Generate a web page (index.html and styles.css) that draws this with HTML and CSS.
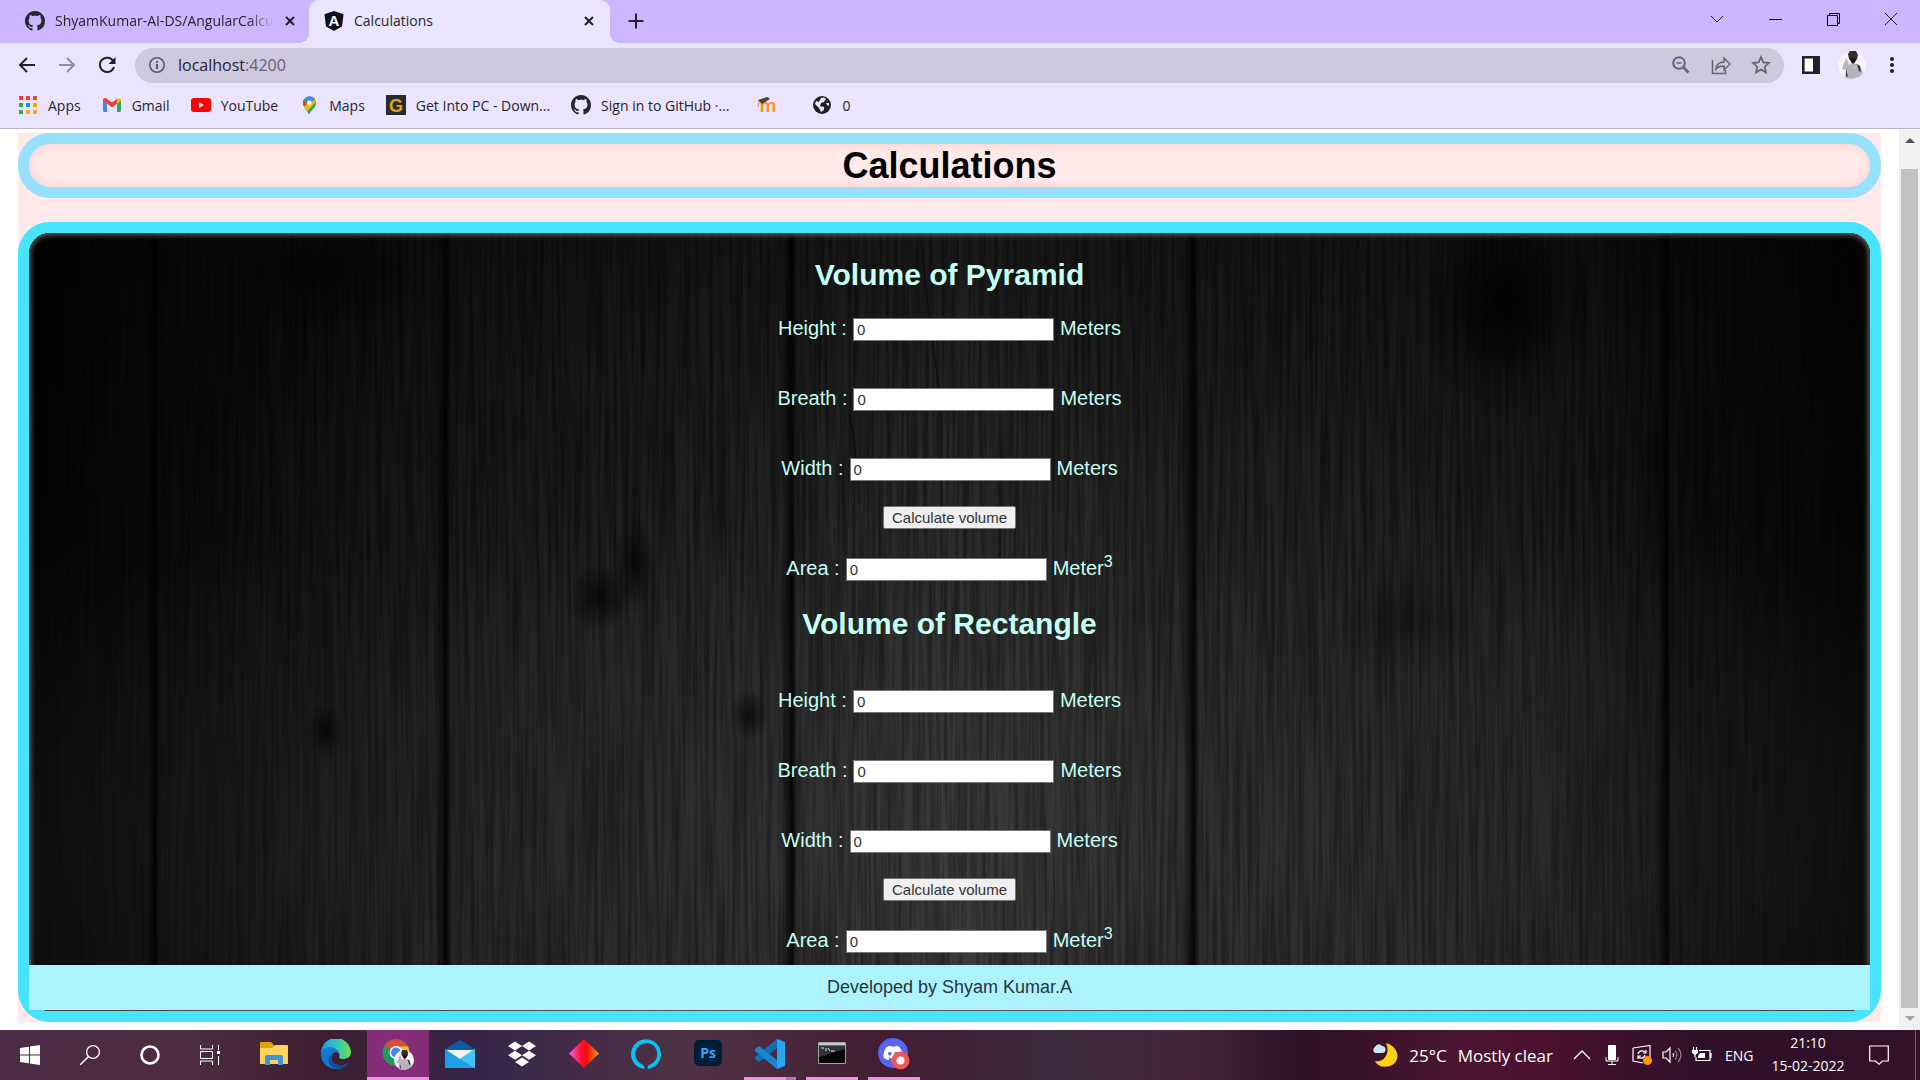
FILE: index.html
```html
<!DOCTYPE html>
<html lang="en">
<head>
<meta charset="utf-8">
<title>Calculations</title>
<link rel="stylesheet" href="styles.css">
</head>
<body>
<svg class="defs" aria-hidden="true">
  <symbol id="github" viewBox="0 0 16 16"><path fill="#24292f" d="M8 0C3.58 0 0 3.58 0 8c0 3.54 2.29 6.53 5.47 7.59.4.07.55-.17.55-.38 0-.19-.01-.82-.01-1.49-2.01.37-2.53-.49-2.69-.94-.09-.23-.48-.94-.82-1.13-.28-.15-.68-.52-.01-.53.63-.01 1.08.58 1.23.82.72 1.21 1.87.87 2.33.66.07-.52.28-.87.51-1.07-1.78-.2-3.64-.89-3.64-3.95 0-.87.31-1.59.82-2.15-.08-.2-.36-1.02.08-2.12 0 0 .67-.21 2.2.82.64-.18 1.32-.27 2-.27s1.36.09 2 .27c1.53-1.04 2.2-.82 2.2-.82.44 1.1.16 1.92.08 2.12.51.56.82 1.27.82 2.15 0 3.07-1.87 3.75-3.65 3.95.29.25.54.73.54 1.48 0 1.07-.01 1.93-.01 2.2 0 .21.15.46.55.38A8.01 8.01 0 0 0 16 8c0-4.42-3.58-8-8-8z"/></symbol>
  <symbol id="close" viewBox="0 0 12 12"><path d="M2 2l8 8M10 2l-8 8" stroke="#202124" stroke-width="2" fill="none"/></symbol>
  <symbol id="portrait" viewBox="0 0 28 28">
    <circle cx="14" cy="14" r="14" fill="#f5f3f5"/>
    <path d="M7 27l1-8-4-1 3-8h3l1 4 3-2 5 1 4 4 2 5-4 4-7 2z" fill="#b4b3bb"/>
    <path d="M19 13l3 2 1 6-2-1zM8 18l2 8-2-1z" fill="#33323a"/>
    <path d="M10 3l2-3h6l2 4-1 4-2 3h-3l-3-3z" fill="#3a2a26"/>
    <path d="M12 7h6l-1 4-2 2-2-2z" fill="#17151a"/>
    <path d="M7 10l1-3 2 3v4zM15 15l3 1-1 3z" fill="#d9b7a8"/>
  </symbol>
</svg>

<header class="browser">
  <div class="tabs">
    <div class="tab">
      <svg class="i20"><use href="#github"/></svg>
      <span class="tab-title fade">ShyamKumar-AI-DS/AngularCalcu</span>
      <button class="plain" aria-label="Close tab"><svg class="i12"><use href="#close"/></svg></button>
    </div>
    <div class="tab active">
      <svg class="i20" viewBox="0 0 20 20"><path d="M10 0l9.500 3.300-1.500 12.200L10 20l-8-4.500L.5 3.300z" fill="#0d0f1c"/><text x="10" y="15" text-anchor="middle" class="logo-a">A</text></svg>
      <span class="tab-title">Calculations</span>
      <button class="plain" aria-label="Close tab"><svg class="i12"><use href="#close"/></svg></button>
    </div>
    <button class="plain new-tab" aria-label="New tab"><svg class="i16" viewBox="0 0 16 16"><path d="M8 .5v15M.5 8h15" stroke="#202124" stroke-width="2"/></svg></button>
    <div class="window-buttons">
      <button class="plain" aria-label="Search tabs"><svg class="i14" viewBox="0 0 14 14"><path d="M1 4l6 6 6-6" fill="none" stroke="#222"/></svg></button>
      <button class="plain" aria-label="Minimise"><svg class="i14" viewBox="0 0 14 14"><path d="M1 7.500h13" stroke="#000"/></svg></button>
      <button class="plain" aria-label="Restore"><svg class="i14" viewBox="0 0 14 14"><path d="M1.500 3.500h10v10h-10zM3.500 3V1.500h10v10H12" fill="none" stroke="#000"/></svg></button>
      <button class="plain" aria-label="Close"><svg class="i14" viewBox="0 0 14 14"><path d="M1 1l12 12M13 1L1 13" stroke="#222"/></svg></button>
    </div>
  </div>

  <div class="toolbar">
    <button class="plain nav" aria-label="Back"><svg class="i18" viewBox="0 0 18 18"><path d="M17 9H2M9 2L2 9l7 7" fill="none" stroke="#202124" stroke-width="2"/></svg></button>
    <button class="plain nav" aria-label="Forward"><svg class="i18" viewBox="0 0 18 18"><path d="M1 9h15M9 2l7 7-7 7" fill="none" stroke="#918da0" stroke-width="2"/></svg></button>
    <button class="plain nav" aria-label="Reload"><svg class="i18" viewBox="0 0 18 18"><path d="M15.500 5.500A7.200 7.200 0 1 0 16 11" fill="none" stroke="#202124" stroke-width="2"/><path d="M17.500 1v7h-7z" fill="#202124"/></svg></button>
    <div class="omnibox">
      <svg class="i18" viewBox="0 0 18 18"><circle cx="9" cy="9" r="7.200" fill="none" stroke="#5a5762" stroke-width="1.600"/><path d="M9 8v5M9 5v2" stroke="#5a5762" stroke-width="2"/></svg>
      <a class="url" href="#">localhost<span>:4200</span></a>
      <svg class="i20" viewBox="0 0 20 20"><circle cx="8" cy="8" r="5.800" fill="none" stroke="#67646f" stroke-width="2"/><path d="M12.500 12.500l5 5" stroke="#67646f" stroke-width="2.500"/><path d="M5.500 8h5" stroke="#67646f" stroke-width="1.500"/></svg>
      <svg class="i20" viewBox="0 0 20 20"><path d="M1.500 5v13.500h13V15M5 14c.5-5 3-7 8-7V3l6 6-6 6v-4c-4 0-6 .5-8 3z" fill="none" stroke="#67646f" stroke-width="1.500"/></svg>
      <svg class="i20" viewBox="0 0 20 20"><path d="M10 2l2.300 5.400 5.700.5-4.300 3.800 1.300 5.800-5-3-5 3 1.300-5.800L2 7.900l5.700-.5z" fill="none" stroke="#67646f" stroke-width="1.700"/></svg>
    </div>
    <svg class="i18" viewBox="0 0 18 18"><path d="M1.300 1.300h15.400v15.400H1.300z" fill="#fdfcff" stroke="#202124" stroke-width="2.600"/><path d="M11 1h6v16h-6z" fill="#202124"/></svg>
    <svg class="i28"><use href="#portrait"/></svg>
    <svg class="i16" viewBox="0 0 16 16"><g fill="#202124"><circle cx="8" cy="2" r="2"/><circle cx="8" cy="8" r="2"/><circle cx="8" cy="14" r="2"/></g></svg>
  </div>

  <nav class="bookmarks">
    <a href="#"><svg class="i20" viewBox="0 0 20 20"><g fill="#ea4335"><path d="M1 1h4v4H1zM8 1h4v4H8zM15 1h4v4h-4z"/></g><path d="M1 8h4v4H1zM1 15h4v4H1z" fill="#34a853"/><path d="M8 8h4v4H8z" fill="#1a8cf0"/><path d="M15 8h4v4h-4zM8 15h4v4H8zM15 15h4v4h-4z" fill="#fbaa05"/></svg>Apps</a>
    <a href="#"><svg class="i20" viewBox="0 0 20 20"><path d="M1 5l4 3v9H2.500Q1 17 1 15.500z" fill="#4285f4"/><path d="M19 5l-4 3v9h2.500q1.500 0 1.500-1.500z" fill="#34a853"/><path d="M1 5c0-2 2-2.500 3.500-1.500L10 7.500l5.500-4L15 8.500l-5 4-5-4-4-2z" fill="#ea4335"/><path d="M15 4c2-1.500 4-.5 4 1.500l-4 3.500z" fill="#fbbc04"/></svg>Gmail</a>
    <a href="#"><svg class="i20" viewBox="0 0 20 20"><rect y="3" width="20" height="14" rx="3" fill="red"/><path d="M8 7l5 3-5 3z" fill="#fff"/></svg>YouTube</a>
    <a href="#"><svg class="i20" viewBox="0 0 20 20"><path d="M10 20c-1-4-6-7-6-12a7 7 0 0 1 1-4l10-1a7 7 0 0 1 2 5c0 5-6 8-7 12z" fill="#34a853"/><path d="M5 12l9-9 2.500 4-8.500 9.500z" fill="#fbbc04"/><path d="M4.500 5L8 10l-3.500 1A7 7 0 0 1 4.500 5z" fill="#ea4335"/><path d="M5 4.500A6.500 6.500 0 0 1 15.800 4L11 9z" fill="#4285f4"/><circle cx="10.300" cy="7.500" r="2.300" fill="#fff"/></svg>Maps</a>
    <a href="#"><svg class="i20" viewBox="0 0 20 20"><path d="M0 0h20v20H0z" fill="#2b2b2d"/><text x="10" y="17" text-anchor="middle" class="logo-g">G</text></svg>Get Into PC - Down...</a>
    <a href="#"><svg class="i20"><use href="#github"/></svg>Sign in to GitHub ·...</a>
    <a href="#" class="moodle" aria-label="Moodle"><svg class="i20" viewBox="0 0 20 20"><text x="11" y="17" text-anchor="middle" class="logo-m">m</text><path d="M1 5l9-3 3 2-8 5z" fill="#44403f"/><path d="M2 6l-1 6" stroke="#c98b63"/></svg></a>
    <a href="#"><svg class="i20" viewBox="0 0 20 20"><circle cx="10" cy="10" r="9" fill="#202124"/><path d="M9 3c3-.5 4 0 5 1l-2 3-3 1-1 3 4 1v3l-3 2-2-4-4-4 1-3 3 1zM14 8h3v3l-2-1z" fill="#ebe4ff"/></svg>0</a>
  </nav>
</header>

<div class="viewport">
  <main class="page">
    <h1>Calculations</h1>
    <div class="panel">
      <svg class="wood" viewBox="0 0 1841 778" preserveAspectRatio="none" aria-hidden="true">
        <defs>
          <linearGradient id="tone">
            <stop offset="0" stop-color="#040404"/><stop offset=".07" stop-color="#0c0c0c"/><stop offset=".23" stop-color="#1e1e1e"/>
            <stop offset=".42" stop-color="#2a2a2a"/><stop offset=".5" stop-color="#343434"/><stop offset=".62" stop-color="#292929"/>
            <stop offset=".82" stop-color="#222"/><stop offset=".9" stop-color="#121212"/><stop offset="1" stop-color="#050505"/>
          </linearGradient>
          <linearGradient id="fall" x2="0" y2="1"><stop offset="0" stop-color="#000" stop-opacity=".5"/><stop offset=".4" stop-color="#000" stop-opacity=".12"/><stop offset="1" stop-color="#fff" stop-opacity=".03"/></linearGradient>
          <linearGradient id="seam"><stop offset="0" stop-color="#000" stop-opacity="0"/><stop offset=".7" stop-color="#000" stop-opacity=".85"/><stop offset="1" stop-color="#000" stop-opacity="0"/></linearGradient>
          <radialGradient id="knot"><stop offset="0" stop-color="#000" stop-opacity=".7"/><stop offset="1" stop-color="#000" stop-opacity="0"/></radialGradient>
          <filter id="grain" x="0" y="0" width="100%" height="100%"><feTurbulence type="fractalNoise" baseFrequency=".26 .006" numOctaves="4" seed="7"/><feColorMatrix values="0 0 0 0 0  0 0 0 0 0  0 0 0 0 0  2.500 0 0 0 -.85"/></filter>
        </defs>
        <rect width="1841" height="778" fill="url(#tone)"/>
        <rect width="1841" height="778" filter="url(#grain)" opacity=".42"/>
        <rect width="1841" height="778" fill="url(#fall)"/>
        <g fill="url(#seam)">
          <rect x="118" width="12" height="778"/><rect x="406" width="16" height="778"/><rect x="752" width="16" height="778"/>
          <rect x="1154" width="16" height="778"/><rect x="1628" width="14" height="778"/>
        </g>
        <g fill="url(#knot)">
          <ellipse cx="571" cy="364" rx="32" ry="34"/><ellipse cx="606" cy="330" rx="20" ry="50"/><ellipse cx="296" cy="498" rx="18" ry="30"/>
          <ellipse cx="720" cy="482" rx="20" ry="26"/><ellipse cx="1475" cy="64" rx="64" ry="80"/><ellipse cx="1475" cy="74" rx="90" ry="120"/><ellipse cx="290" cy="40" rx="110" ry="60"/>
          <ellipse cx="1380" cy="390" rx="90" ry="50" opacity=".4"/>
        </g>
        <g fill="none" stroke="#000" stroke-opacity=".6">
          <path d="M892 6l6 60 8 60 6 50 1 120"/><path d="M820 180l6 30 4 60"/><path d="M268 10l6 60 4 60"/>
        </g>
      </svg>
      <form class="calc">
        <h2>Volume of Pyramid</h2>
        <div class="row"><label for="p-height">Height :</label><input id="p-height" value="0"><span>Meters</span></div>
        <div class="row spaced"><label for="p-breath">Breath :</label><input id="p-breath" value="0"><span>Meters</span></div>
        <div class="row spaced"><label for="p-width">Width :</label><input id="p-width" value="0"><span>Meters</span></div>
        <button class="calc-button" type="button">Calculate volume</button>
        <div class="row result"><label for="p-area">Area :</label><input id="p-area" value="0"><span>Meter<sup>3</sup></span></div>
      </form>
      <form class="calc">
        <h2>Volume of Rectangle</h2>
        <div class="row lead"><label for="r-height">Height :</label><input id="r-height" value="0"><span>Meters</span></div>
        <div class="row spaced"><label for="r-breath">Breath :</label><input id="r-breath" value="0"><span>Meters</span></div>
        <div class="row spaced"><label for="r-width">Width :</label><input id="r-width" value="0"><span>Meters</span></div>
        <button class="calc-button" type="button">Calculate volume</button>
        <div class="row result"><label for="r-area">Area :</label><input id="r-area" value="0"><span>Meter<sup>3</sup></span></div>
      </form>
      <footer>Developed by Shyam Kumar.A</footer>
    </div>
  </main>
  <div class="scrollbar" aria-hidden="true">
    <svg class="arrow" viewBox="0 0 10 6"><path d="M0 6l5-5 5 5z" fill="#505050"/></svg>
    <div class="thumb"></div>
    <svg class="arrow" viewBox="0 0 10 6"><path d="M0 0l5 5 5-5z" fill="#a3a3a3"/></svg>
  </div>
</div>

<div class="taskbar">
  <div class="system">
    <button class="plain" aria-label="Start"><svg class="i20" viewBox="0 0 20 20"><path d="M0 3l9-1.300v7.800H0zM10 1.500L20 0v9.500H10zM0 10.500h9v7.800L0 17zM10 10.500h10V20l-10-1.500z" fill="#fff"/></svg></button>
    <button class="plain" aria-label="Search"><svg class="i20" viewBox="0 0 20 20"><circle cx="13" cy="7" r="6.400" fill="none" stroke="#fff" stroke-width="1.300"/><path d="M8.500 11.500L0 20" stroke="#fff" stroke-width="1.400"/></svg></button>
    <button class="plain" aria-label="Cortana"><svg class="i20" viewBox="0 0 20 20"><circle cx="10" cy="10" r="8.500" fill="none" stroke="#fff" stroke-width="2.600"/></svg></button>
    <button class="plain" aria-label="Task view"><svg class="i20" viewBox="0 0 20 20"><path d="M.5 0v4h12V0M.5 20v-4h12v4M.5 6.500h12v7H.5zM18.500 0v5M18.500 11v9" fill="none" stroke="#fff"/><path d="M17 6h3v3h-3z" fill="#fff"/></svg></button>
  </div>
  <div class="apps">
    <button class="plain" aria-label="File Explorer"><svg class="i30" viewBox="0 0 30 30"><path d="M1 4q0-1 1-1h10l3 3v4H1z" fill="#e3a008"/><path d="M1 9h12l3-3h12q1 0 1 1v18H1z" fill="#ffd35b"/><path d="M6 26v-8q0-2 2-2h14q2 0 2 2v8h-5v-5h-8v5z" fill="#3d95d8"/></svg></button>
    <button class="plain" aria-label="Edge"><svg class="i30" viewBox="0 0 30 30"><defs><linearGradient id="edge-top"><stop offset="0" stop-color="#1b9de2"/><stop offset=".5" stop-color="#35c1c0"/><stop offset="1" stop-color="#6ce04d"/></linearGradient></defs><path d="M0 15A15 15 0 0 1 30 13c0 5-4 7-8 7-3 0-4-1-4-2 1-1 1-7-5-8C7 9 1 11 0 15z" fill="url(#edge-top)"/><path d="M0 14c2-5 8-7 13-5 3 1 5 4 5 6-4-4-9 0-8 5 1 6 6 9 11 9C10 33-1 25 0 14z" fill="#0d79d2"/><path d="M13 14c-4 3-2 11 4 12 4 1 8 0 11-3-3 6-11 9-17 5-5-4-5-12 2-14z" fill="#134f9c"/></svg></button>
    <button class="plain current" aria-label="Chrome"><svg class="i32" viewBox="0 0 32 32"><circle cx="14" cy="14.500" r="13.500" fill="#1f9b57"/><path d="M14 14.500L2.500 7.500A13.500 13.500 0 0 1 25.500 8z" fill="#dc4a3f"/><path d="M14 8.500h12a13.500 13.500 0 0 1-11 19.500l5-11z" fill="#fbc116"/><circle cx="14" cy="14.500" r="6.500" fill="#fff"/><circle cx="14" cy="14.500" r="5" fill="#4285f4"/><use href="#portrait" x="12" y="12" width="20" height="20"/></svg></button>
    <button class="plain" aria-label="Mail"><svg class="i30" viewBox="0 0 30 30"><path d="M0 10l15-9 15 9v5H0z" fill="#0c5ba5"/><path d="M2 11h26v10H2z" fill="#f2f3f4"/><path d="M0 10l15 10 15-10v19H0z" fill="#1fa0e6"/><path d="M30 10L15 20l15 9z" fill="#42c5f3"/></svg></button>
    <button class="plain" aria-label="Dropbox"><svg class="i30" viewBox="0 0 30 30"><path d="M8 2.500l7 4.500-7 4.500L1 7zM22 2.500L29 7l-7 4.500L15 7zM8 11.700l7 4.500-7 4.500-7-4.500zM22 11.700l7 4.500-7 4.500-7-4.500zM15 18.500l7 4.500-7 4.500L8 23z" fill="#fff"/></svg></button>
    <button class="plain" aria-label="Diamond"><svg class="i30" viewBox="0 0 30 30"><defs><linearGradient id="gem"><stop offset=".1" stop-color="#f84fc0"/><stop offset=".4" stop-color="#ff1030"/><stop offset=".6" stop-color="#f20d0d"/><stop offset="1" stop-color="#ff9d00"/></linearGradient></defs><path d="M15 0l15 14.500L15 29 0 14.500z" fill="url(#gem)"/></svg></button>
    <button class="plain" aria-label="Alexa"><svg class="i30" viewBox="0 0 30 30"><path d="M13 30A15 15 0 1 1 17 30c-1-2 0-4 3-5a11 11 0 1 0-10-.3c3 1.300 4 2.800 3 5.300z" fill="#05c3f5"/></svg></button>
    <button class="plain" aria-label="Photoshop"><svg class="i30" viewBox="0 0 30 30"><rect x="1" y="1" width="28" height="26" rx="5" fill="#001e36"/><text x="15" y="19" text-anchor="middle" class="logo-ps">Ps</text></svg></button>
    <button class="plain running stacked" aria-label="Visual Studio Code"><svg class="i30" viewBox="0 0 30 30"><path d="M22 0v9L4 23l-4-3v-2z" fill="#0e70b8"/><path d="M22 30v-9L4 7l-4 3v2z" fill="#1687cf"/><path d="M22 0l8 3v24l-8 3z" fill="#2ba4f2"/></svg></button>
    <button class="plain running" aria-label="Command Prompt"><svg class="i30" viewBox="0 0 30 30"><path d="M1.500 3.500h27v21h-27z" fill="#050505" stroke="#9ca4a4"/><path d="M2 4h26v2.500H2z" fill="#c9cdd0"/><path d="M2 7h26v3L2 18z" fill="#333"/><path d="M4 9h3M9 9v3M11 9l2 3M14 12h4" stroke="#ddd"/></svg></button>
    <button class="plain running" aria-label="Discord"><svg class="i32" viewBox="0 0 32 32"><circle cx="15" cy="15" r="15" fill="#5865f2"/><path transform="translate(5.500 5.500) scale(.79)" fill="#fff" d="M20.317 4.370a19.791 19.791 0 00-4.885-1.515.074.074 0 00-.079.037c-.211.375-.445.865-.608 1.250-1.845-.276-3.680-.276-5.487 0-.164-.393-.406-.874-.618-1.250a.077.077 0 00-.079-.037 19.736 19.736 0 00-4.885 1.515.070.070 0 00-.032.028C.533 9.046-.319 13.580.099 18.058a.082.082 0 00.031.056c2.053 1.508 4.041 2.423 5.993 3.029a.078.078 0 00.084-.028c.462-.630.873-1.295 1.226-1.994a.076.076 0 00-.042-.106c-.653-.248-1.274-.550-1.872-.892a.077.077 0 01-.008-.128c.126-.094.252-.192.372-.291a.074.074 0 01.078-.011c3.928 1.793 8.180 1.793 12.061 0a.074.074 0 01.079.010c.120.099.246.198.373.292a.077.077 0 01-.007.128 12.299 12.299 0 01-1.873.891.077.077 0 00-.041.107c.360.698.772 1.363 1.225 1.993a.076.076 0 00.084.029c1.961-.607 3.950-1.522 6.002-3.029a.077.077 0 00.031-.055c.500-5.177-.838-9.674-3.549-13.660a.061.061 0 00-.031-.029zM8.020 15.331c-1.183 0-2.157-1.086-2.157-2.419 0-1.333.956-2.419 2.157-2.419 1.211 0 2.176 1.095 2.157 2.419 0 1.333-.956 2.419-2.157 2.419zm7.975 0c-1.183 0-2.157-1.086-2.157-2.419 0-1.333.955-2.419 2.157-2.419 1.211 0 2.176 1.095 2.157 2.419 0 1.333-.946 2.419-2.157 2.419z"/><circle cx="22.500" cy="22.500" r="9" fill="#ed5757"/><circle cx="22.500" cy="22.500" r="4" fill="#fff"/></svg></button>
  </div>
  <div class="tray">
    <div class="weather">
      <svg class="i26" viewBox="0 0 26 26"><path d="M14 1c14 4 15 19 4 23-6 2-13 0-15-5 8 2 16-7 11-18z" fill="#fdd013"/><path d="M3 11a3.500 3.500 0 0 1 0-6 4 4 0 0 1 7-1 3.500 3.500 0 0 1 0 7z" fill="#c9e5f8"/></svg>
      <span>25°C</span><span>Mostly clear</span>
    </div>
    <div class="status">
      <svg class="i20" viewBox="0 0 20 20"><path d="M2 14l8-8 8 8" fill="none" stroke="#fff" stroke-width="1.300"/></svg>
      <svg class="i20" viewBox="0 0 20 20"><rect x="6" y="0" width="8" height="15" rx="1" fill="#fff"/><path d="M4 12v4h12v-4M10 16v3M6 19.500h8" fill="none" stroke="#fff"/></svg>
      <svg class="i20" viewBox="0 0 20 20"><path d="M1 3l17-2.500v14M1 3v13l10 2M6 9c1-4 7-4 8-1M14 5v3h-3M13 10c-1 4-6 4-7 1M6 14v-3h3" fill="none" stroke="#fff" stroke-width="1.200"/><circle cx="15.500" cy="15.500" r="4.500" fill="#ff9500"/></svg>
      <svg class="i20" viewBox="0 0 20 20"><path d="M1 7h3l4-4v14l-4-4H1zM11 8q1.500 2 0 4" fill="none" stroke="#fff" stroke-width="1.200"/><path d="M13 5.500q4 4.500 0 9M16 3q6 7 0 14" fill="none" stroke="#9b8291" stroke-width="1.200"/></svg>
      <svg class="i20" viewBox="0 0 20 20"><path d="M7 5.500h11v10H4V12M19 8v5M3 9v3M1.500 2v3M4.500 2v3" fill="none" stroke="#fff" stroke-width="1.200"/><path d="M0 5h6v3L3 10 0 8zM8 8h5v5H6v-2z" fill="#fff"/></svg>
    </div>
    <span class="lang">ENG</span>
    <div class="clock"><span>21:10</span><span>15-02-2022</span></div>
    <button class="plain note" aria-label="Notifications"><svg class="i20" viewBox="0 0 20 20"><path d="M.7 1h18.600v15h-6l-3.300 3.300L6.700 16h-6z" fill="none" stroke="#fff" stroke-width="1.200"/></svg></button>
    <span class="show-desktop"></span>
  </div>
</div>
</body>
</html>
```
FILE: styles.css
```css
* { box-sizing: border-box; }

body {
  margin: 0;
  min-height: 100vh;
  display: flex;
  flex-direction: column;
  background: #fff;
  font-family: "Liberation Sans", Arial, sans-serif;
}

svg { display: block; flex: none; }
.defs { position: absolute; width: 0; height: 0; }
.i12 { width: 12px; height: 12px; }
.i14 { width: 14px; height: 14px; }
.i16 { width: 16px; height: 16px; }
.i18 { width: 18px; height: 18px; }
.i20 { width: 20px; height: 20px; }
.i26 { width: 26px; height: 26px; }
.i28 { width: 28px; height: 28px; }
.i30 { width: 30px; height: 30px; }
.i32 { width: 32px; height: 32px; }

.plain {
  border: 0;
  padding: 0;
  background: none;
  display: flex;
  align-items: center;
  justify-content: center;
}

.logo-a { font: bold 15px "Liberation Sans", sans-serif; fill: #fff; }
.logo-g { font: bold 18px "Liberation Sans", sans-serif; fill: #e0a420; }
.logo-m { font: bold 19px "Liberation Sans", sans-serif; fill: #f7942c; }
.logo-ps { font: bold 14px "Open Sans", sans-serif; fill: #31a8ff; }

/* Browser frame */
.browser {
  background: #ebe4ff;
  border-bottom: 1px solid #bab5ca;
  font-family: "Open Sans", "Noto Sans", sans-serif;
  font-size: 14px;
  color: #26242c;
}
.tabs { display: flex; height: 43px; background: #cbb6ff; }
.tab {
  width: 309px;
  display: flex;
  align-items: center;
  gap: 10px;
  padding: 0 13px 2px 25px;
}
.tab.active {
  position: relative;
  width: 301px;
  padding: 0 15px 2px 15px;
  background: #ebe4ff;
  border-radius: 10px 10px 0 0;
}
.tab.active::before,
.tab.active::after {
  content: "";
  position: absolute;
  bottom: 0;
  width: 10px;
  height: 10px;
}
.tab.active::before { right: 100%; background: radial-gradient(circle at 0 0, transparent 10px, #ebe4ff 10px); }
.tab.active::after { left: 100%; background: radial-gradient(circle at 100% 0, transparent 10px, #ebe4ff 10px); }
.tab-title { flex: 1; overflow: hidden; white-space: nowrap; }
.fade { -webkit-mask-image: linear-gradient(90deg, #000 88%, transparent); mask-image: linear-gradient(90deg, #000 88%, transparent); }
.new-tab { width: 52px; padding-bottom: 1px; }
.window-buttons { display: flex; margin-left: auto; }
.window-buttons button { width: 58px; padding-bottom: 6px; }

.toolbar {
  display: flex;
  align-items: center;
  height: 46px;
  padding: 0 20px 2px 7px;
  gap: 18px;
}
.nav { width: 40px; margin-right: -18px; }
.omnibox {
  flex: 1;
  display: flex;
  align-items: center;
  gap: 20px;
  height: 35px;
  margin-left: 26px;
  padding: 0 13px;
  border-radius: 18px;
  background: #cfc9df;
}
.nav + .omnibox { margin-left: 26px; }
.nav:nth-child(3) { margin-right: -36px; }
.url { flex: 1; margin-left: -8px; color: #26242c; font-size: 16px; text-decoration: none; }
.url span { color: #66626f; }

.bookmarks { display: flex; align-items: center; gap: 21px; height: 39px; padding: 0 18px 7px; }
.bookmarks a { display: flex; align-items: center; gap: 10px; color: inherit; text-decoration: none; white-space: nowrap; }
.bookmarks .moodle { padding: 0 14px 0 7px; }

/* Page content */
.viewport { flex: 1; display: flex; }
.page { flex: 1; margin: 4px 18px 8px; background: #ffe9e9; }
h1 {
  margin: 0 0 24px;
  border: 11px solid #96e1ff;
  border-radius: 32px;
  box-shadow: inset 0 0 8px #ffc9c3;
  font-size: 36px;
  line-height: 43px;
  text-align: center;
  color: #000;
}
.panel {
  position: relative;
  border: 11px solid #48e4ff;
  border-radius: 32px;
  padding: 24px 0 1px;
  background: #111;
}
.wood { position: absolute; inset: 0; width: 100%; height: 100%; border-radius: 21px; }
.panel::after {
  content: "";
  position: absolute;
  inset: 0;
  border-radius: 21px;
  box-shadow: inset 0 0 6px 1px #7c7976;
  pointer-events: none;
}
.calc {
  position: relative;
  display: flex;
  flex-direction: column;
  align-items: center;
  color: #c6fff3;
  font-size: 20px;
  line-height: 20px;
}
.calc + .calc { margin-top: 25px; }
h2 { margin: 0; font-size: 30px; line-height: 36px; }
.row { display: flex; align-items: baseline; gap: 6px; height: 23px; margin-top: 25px; }
.row.spaced { margin-top: 47px; }
.row.lead { margin-top: 48px; }
.row.result { margin-top: 29px; }
.row input {
  width: 201px;
  height: 23px;
  padding: 0 3px;
  border: 1px solid #767676;
  background: #fff;
  color: #333;
  font: 15px "Liberation Sans", Arial, sans-serif;
}
sup { font-size: 16px; line-height: 0; }
.calc-button {
  height: 23px;
  margin-top: 25px;
  padding: 0 8px;
  border: 1px solid #767676;
  border-radius: 2px;
  background: #efefef;
  color: #333;
  font: 15px "Liberation Sans", Arial, sans-serif;
}
footer {
  position: relative;
  z-index: 1;
  margin-top: 12px;
  background: #adf3ff;
  color: #26343a;
  font-size: 18px;
  line-height: 45px;
  text-align: center;
}
.scrollbar {
  width: 21px;
  display: flex;
  flex-direction: column;
  align-items: center;
  background: #f1f1f1;
}
.arrow { width: 10px; height: 6px; margin: 8px 0; }
.scrollbar .arrow:first-child { margin-bottom: 26px; }
.thumb { flex: 1; width: 17px; background: #c1c1c1; }

/* Taskbar */
.taskbar {
  display: flex;
  height: 50px;
  background: linear-gradient(90deg, #4b2b47, #4e2c3f 10%, #3c1e30 17%, #37254a 25%, #503244 36%, #421d33 46%, #3d2a40 55%, #44253a 62%, #2e1126 68%, #4b1530 76%, #4b1230 80%, #32102b 88%, #300f29 93%, #35122b);
  color: #fff;
  font-family: "Open Sans", "Noto Sans", sans-serif;
}
.system { display: flex; margin-right: 3px; }
.system button { width: 60px; }
.apps { display: flex; }
.apps button { width: 62px; border-bottom: 3px solid transparent; }
.apps .current { background: #842c77; border-bottom-color: #e994dd; }
.apps .running {
  width: 52px;
  margin: 0 5px;
  border-bottom-color: #e994dd;
}
.apps .stacked { border-image: linear-gradient(90deg, #e994dd 78%, #b374b0 78%) 3; }
.tray { display: flex; align-items: center; margin-left: auto; padding-right: 4px; }
.weather { display: flex; align-items: center; gap: 11px; font-size: 17px; white-space: nowrap; }
.status { display: flex; gap: 10px; margin-left: 19px; }
.lang { width: 30px; margin-left: 13px; font-size: 14px; }
.clock {
  display: flex;
  flex-direction: column;
  align-items: center;
  width: 78px;
  margin-left: 14px;
  padding-bottom: 3px;
  font-size: 14px;
  line-height: 23px;
}
.note { margin-left: 22px; }
.show-desktop { align-self: stretch; width: 1px; margin-left: 26px; background: #77606f; }
```
